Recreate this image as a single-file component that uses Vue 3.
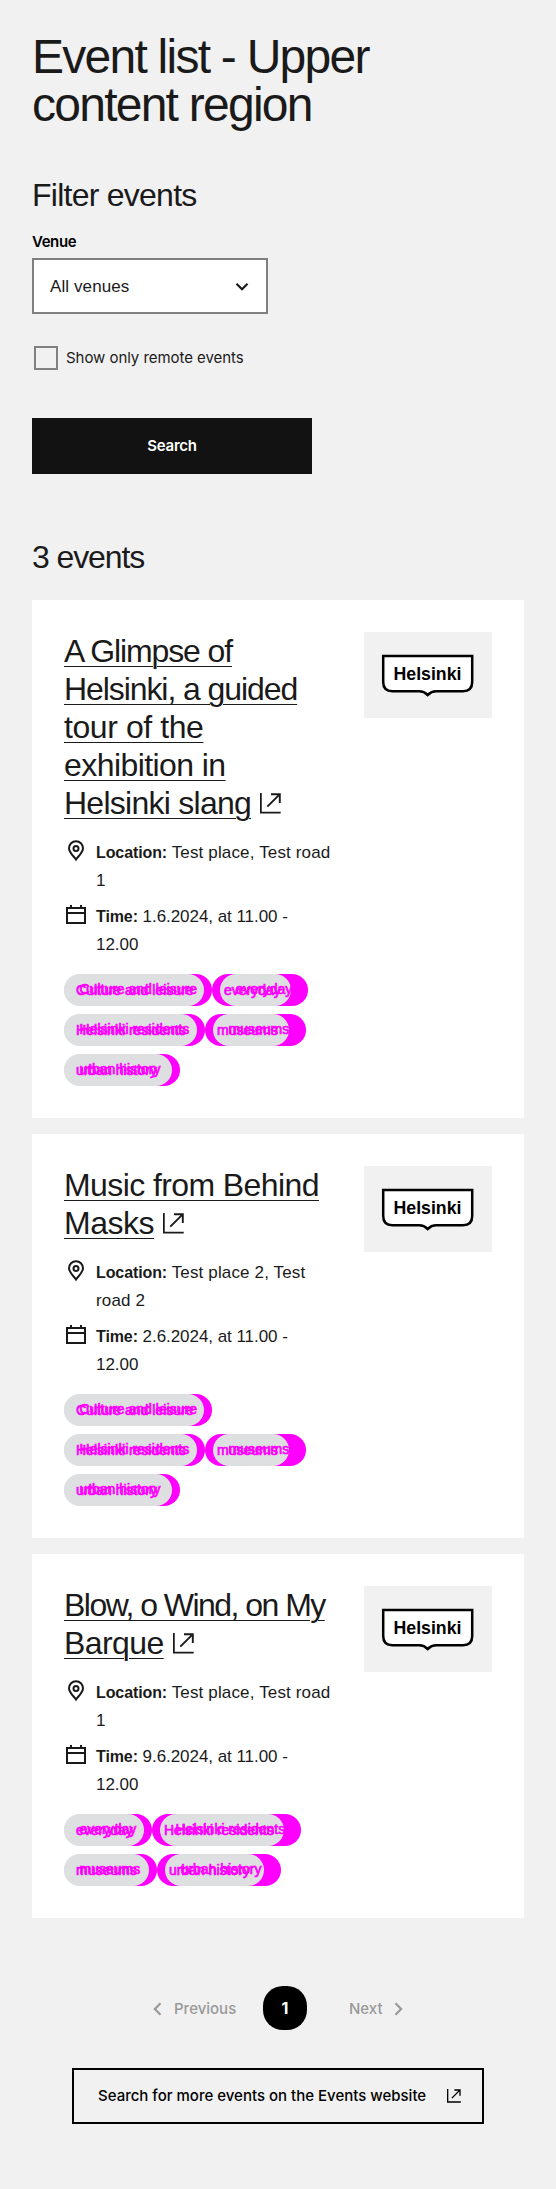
<script setup>
const line = (text, spacing) => ({ text, spacing })
// w: full chip width, body: width of the grey face, inset: its left offset
const tag = (text, w, body, inset = 0) => ({ text, w, body, inset })

const events = [
  {
    title: [line('A Glimpse of', -1.12), line('Helsinki, a guided', -1.08), line('tour of the', -0.42), line('exhibition in', -0.57), line('Helsinki slang', -0.74)],
    place: ['Test place, Test road', '1'],
    time: ['1.6.2024, at 11.00 -', '12.00'],
    tags: [
      [tag('Culture and leisure', 148, 140), tag('everyday', 96, 71, 8)],
      [tag('Helsinki residents', 141, 133), tag('museums', 101, 76, 8)],
      [tag('urban history', 116, 108)],
    ],
  },
  {
    title: [line('Music from Behind', -0.59), line('Masks', -0.5)],
    place: ['Test place 2, Test', 'road 2'],
    time: ['2.6.2024, at 11.00 -', '12.00'],
    tags: [
      [tag('Culture and leisure', 148, 140)],
      [tag('Helsinki residents', 141, 133), tag('museums', 101, 76, 8)],
      [tag('urban history', 116, 108)],
    ],
  },
  {
    title: [line('Blow, o Wind, on My', -1.53), line('Barque', -0.58)],
    place: ['Test place, Test road', '1'],
    time: ['9.6.2024, at 11.00 -', '12.00'],
    tags: [
      [tag('everyday', 88, 80), tag('Helsinki residents', 149, 124, 8)],
      [tag('museums', 93, 85), tag('urban history', 124, 99, 8)],
    ],
  },
]
</script>

<template>
  <main class="page">
    <h1>Event list - Upper<br>content region</h1>

    <form class="filters" @submit.prevent>
      <h2 class="filter-title">Filter events</h2>
      <label class="field-label">Venue</label>
      <div class="select">
        <span>All venues</span>
        <svg width="14" height="10" viewBox="0 0 14 10"><path d="M1.5 1.7 7 7.2l5.500-5.500" fill="none" stroke="#1a1a1a" stroke-width="2.2" /></svg>
      </div>
      <div class="check"><span class="box"></span><span class="check-text">Show only remote events</span></div>
      <button class="submit">Search</button>
    </form>

    <h2 class="count">3 events</h2>

    <section class="cards">
      <article v-for="(ev, i) in events" :key="i" class="card">
        <div class="content">
          <h3>
            <span v-for="(l, j) in ev.title" :key="j" class="title-line">
              <a :style="{ letterSpacing: l.spacing + 'px' }">{{ l.text }}</a>
              <svg v-if="j === ev.title.length - 1" class="ext" width="21" height="21" viewBox="0 0 21 21">
                <path d="M.8 0V19.600H20.700M11 1.200H19.800V10M7.300 13.700 19.400 1.600" fill="none" stroke="#1a1a1a" stroke-width="1.9" />
              </svg>
            </span>
          </h3>
          <div class="row">
            <svg width="24" height="24" viewBox="0 0 24 24" fill="none" stroke="#1a1a1a" stroke-width="2">
              <path d="M12 21.500C10.300 18.800 5 14.600 5 10.200a7 7 0 0 1 14 0c0 4.400-5.300 8.600-7 11.300Z" />
              <circle cx="12" cy="10.400" r="2.500" />
            </svg>
            <div class="place"><b>Location:</b> {{ ev.place[0] }}<br>{{ ev.place[1] }}</div>
          </div>
          <div class="row">
            <svg width="24" height="24" viewBox="0 0 24 24" fill="none" stroke="#1a1a1a" stroke-width="2">
              <path d="M3 6H21V21H3ZM3 11H21M7 3V6M17 3V6" />
            </svg>
            <div class="time"><b>Time:</b> {{ ev.time[0] }}<br>{{ ev.time[1] }}</div>
          </div>
          <div class="tags">
            <div v-for="(group, g) in ev.tags" :key="g" class="tag-row">
              <div v-for="t in group" :key="t.text" class="tag" :class="{ shifted: t.inset }" :style="{ width: t.w + 'px', paddingLeft: t.inset + 'px' }">
                <div class="face" :style="{ width: t.body + 'px' }"></div>
                <span class="under">{{ t.text }}</span>
                <span class="over" aria-hidden="true">{{ t.text }}</span>
              </div>
            </div>
          </div>
        </div>
        <svg class="logo" width="128" height="86" viewBox="0 0 128 86">
          <path d="M19.200 24H108.200V50Q108.200 59.200 99 59.200H72Q67.500 59.200 63.700 63Q59.900 59.200 55.400 59.200H28.400Q19.200 59.200 19.200 50Z" fill="#fff" stroke="#000" stroke-width="2.5" />
          <text x="29.500" y="48" textLength="68" lengthAdjust="spacingAndGlyphs">Helsinki</text>
        </svg>
      </article>
    </section>

    <nav class="pagination">
      <span class="page-link prev">
        <svg width="9" height="14" viewBox="0 0 9 14"><path d="M7.500 1.300 1.900 7l5.600 5.700" fill="none" stroke="currentColor" stroke-width="2.200" /></svg>
        Previous
      </span>
      <span class="current">1</span>
      <span class="page-link next">
        Next
        <svg width="9" height="14" viewBox="0 0 9 14"><path d="M1.500 1.300 7.100 7l-5.600 5.700" fill="none" stroke="currentColor" stroke-width="2.200" /></svg>
      </span>
    </nav>

    <a class="more">
      <span>Search for more events on the Events website</span>
      <svg width="14" height="14" viewBox="0 0 21 21"><path d="M1 0V19.500H20.700M11 1.500H19.500V10M7.300 13.700 19.400 1.600" fill="none" stroke="#000" stroke-width="2" /></svg>
    </a>
  </main>
</template>

<style>
body { background: #f1f1f1; }
</style>

<style scoped>
.page { box-sizing: border-box; width: 556px; height: 2189px; padding: 32px 32px 0; background: #f1f1f1; color: #1a1a1a; font-family: "Liberation Sans", Arial, sans-serif; font-size: 16px; }
h1, h2, h3 { margin: 0; font-weight: 400; }
h1 { padding-top: 1px; font-size: 48px; line-height: 48px; letter-spacing: -1.75px; white-space: nowrap; }
h2 { font-size: 32px; line-height: 38px; letter-spacing: -.75px; }
.filters { margin-top: 47px; display: flex; flex-direction: column; align-items: flex-start; }
.field-label { margin-top: 16px; font: 600 15px/24px Inter, sans-serif; letter-spacing: -.4px; color: #000; }
.select { box-sizing: border-box; margin-top: 4px; width: 236px; height: 56px; padding: 1px 17px 0 16px; border: 2px solid #808080; background: #fff; display: flex; align-items: center; justify-content: space-between; font-size: 17px; letter-spacing: .1px; }
.check { margin: 32px 0 48px 2px; display: flex; gap: 8px; height: 24px; }
.box { box-sizing: border-box; width: 24px; height: 24px; border: 2px solid #808080; }
.check-text { font: 400 15px/24px Inter, sans-serif; letter-spacing: -.05px; white-space: nowrap; }
.submit { width: 280px; height: 56px; padding: 0; border: 0; background: #121212; color: #fff; font: 600 15px/24px Inter, sans-serif; letter-spacing: -.2px; }
.count { margin: 64px 0 24px; letter-spacing: -1.1px; }
.cards { display: flex; flex-direction: column; gap: 16px; }
.card { padding: 32px; background: #fff; display: flex; justify-content: space-between; align-items: flex-start; }
h3 { font-size: 32px; line-height: 38px; white-space: nowrap; margin-bottom: 16px; }
.title-line { display: flex; align-items: center; height: 38px; }
.title-line a { text-decoration: underline; text-decoration-thickness: 1px; text-underline-offset: 4px; }
.ext { margin: 0 0 0 9px; }
.row { display: flex; gap: 8px; height: 56px; font-size: 17px; line-height: 28px; margin-bottom: 8px; white-space: nowrap; }
.place { letter-spacing: .15px; }
.time { letter-spacing: -.05px; }
.place, .time { padding-top: .5px; }
.row b { font-size: 16px; letter-spacing: -.1px; }
.tags { margin-top: 16px; display: flex; flex-direction: column; gap: 8px; }
.tag-row { display: flex; }
.tag { position: relative; box-sizing: border-box; height: 32px; border-radius: 16px; background: linear-gradient(to right, #dedfe1 40px, #f0f 40px); font-size: 14px; line-height: 32px; white-space: nowrap; }
.tag.shifted { background: #f0f; }
.face { height: 32px; border-radius: 16px; background: #dedfe1; }
.under, .over { position: absolute; color: #f0f; -webkit-text-stroke: .7px #f0f; }
.under { left: 12px; top: 0; }
.over { left: 15.5px; top: -1px; }
.shifted .over { left: 23.5px; }
.logo { background: #f1f1f1; flex: none; }
.logo text { font: 700 17.500px "Liberation Sans", sans-serif; fill: #000; }
.pagination { margin: 68px 0 38px 121px; height: 44px; display: flex; align-items: center; }
.page-link { display: flex; align-items: center; padding-top: 2px; color: #999; font: 500 15px/24px Inter, sans-serif; }
.prev { gap: 12px; width: 110px; }
.current { width: 44px; height: 44px; border-radius: 20px; background: #000; color: #fff; font: 700 16px/44px Inter, sans-serif; text-align: center; }
.next { margin-left: 42px; gap: 11px; }
.more { box-sizing: border-box; margin-left: 40px; width: 412px; height: 56px; border: 2px solid #000; padding: 0 21px 0 24px; display: flex; align-items: center; justify-content: space-between; color: #000; font: 500 15px/24px Inter, sans-serif; white-space: nowrap; }
</style>
